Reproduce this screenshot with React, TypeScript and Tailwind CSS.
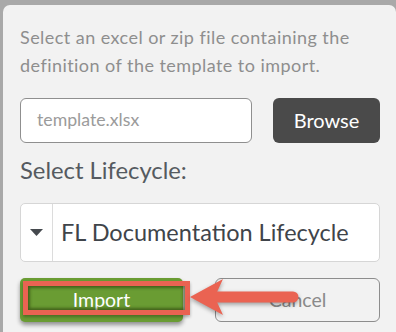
import React from "react";

export default function App() {
  return (
    <div
      className="w-[396px] h-[332px] bg-[#a9a9a9] overflow-hidden pl-[3px] pt-[5px]"
      style={{ fontFamily: "Lato, 'Liberation Sans', sans-serif" }}
    >
      <div className="relative w-[393px] h-[327px] bg-[#f2f2f2] rounded-t-[7px] pl-[17px] pr-[16px] pt-[18px]">
        <p className="text-[18px] leading-[28px] text-[#8e8e8e] tracking-[0.45px]">
          Select an excel or zip file containing the definition of the template to import.
        </p>
        <div className="flex mt-[19px] h-[45px] gap-[21px]">
          <div className="w-[232px] h-full bg-white border border-[#8f8f8f] rounded-[6px] flex items-center pl-[16px] text-[17.7px] text-[#9b9b9b]">
            template.xlsx
          </div>
          <div className="w-[107px] h-full bg-[#4a4a4a] rounded-[6px] flex items-center justify-center pb-[2px] text-white text-[20px]">
            Browse
          </div>
        </div>
        <div className="mt-[13px] text-[23.8px] leading-[28px] text-[#555a60]">Select Lifecycle:</div>
        <div className="mt-[19px] h-[59px] bg-white border border-[#d6d6d6] rounded-[5px] flex">
          <div className="w-[32px] h-full border-r border-[#dcdcdc] flex items-center justify-center">
            <svg width="13" height="7" viewBox="0 0 13 7">
              <polygon points="0,0 13,0 6.5,7" fill="#45494e" />
            </svg>
          </div>
          <div className="flex items-center pl-[8px] text-[23.5px] text-[#3f444a]">
            FL Documentation Lifecycle
          </div>
        </div>
        <div className="mt-[16px] flex justify-between h-[44px]">
          <div className="w-[163px] h-full bg-[#6a9c33] rounded-[5px] shadow-[0_3px_4px_rgba(0,0,0,0.4)] flex items-center justify-center text-white text-[19.5px]">
            Import
          </div>
          <div className="w-[165px] h-full border border-[#8d8d8d] rounded-[6px] flex items-center justify-center text-[#8a8a8a] text-[19.5px]">
            Cancel
          </div>
        </div>
        <div className="absolute left-[20px] top-[276px] w-[167px] h-[34px] border-[5px] border-[#ea6352] shadow-[inset_0_0_3px_2px_rgba(40,60,10,0.6),0_2px_3px_rgba(0,0,0,0.3)]" />
        <svg
          className="absolute left-[185px] top-[273px]"
          width="115"
          height="44"
          viewBox="185 273 115 44"
          style={{ filter: "drop-shadow(0 2px 2px rgba(0,0,0,0.35))" }}
        >
          <line x1="214" y1="292" x2="290" y2="292" stroke="#ea6352" strokeWidth="11" strokeLinecap="round" />
          <polygon points="187,292 220,274 214,287 214,297 220,310" fill="#ea6352" />
        </svg>
      </div>
    </div>
  );
}
